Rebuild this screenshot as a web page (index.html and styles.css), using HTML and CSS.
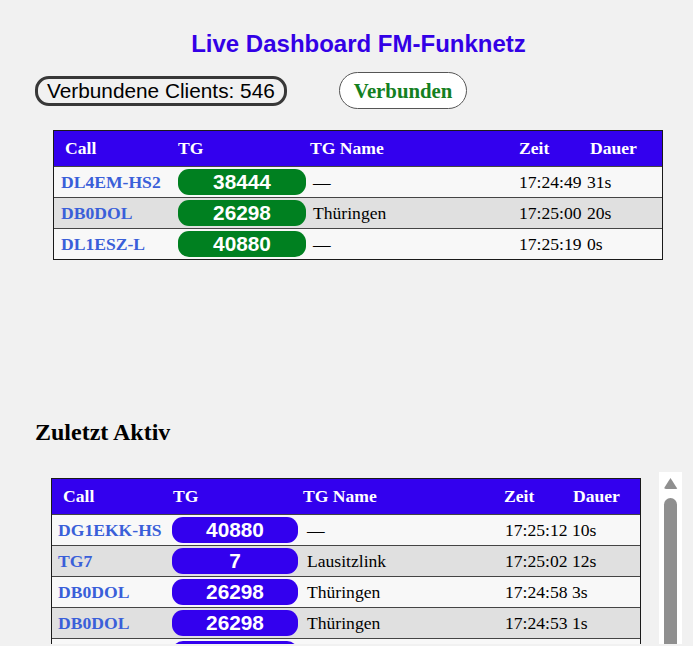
FILE: index.html
```html
<!DOCTYPE html>
<html lang="de">
<head>
<meta charset="utf-8">
<title>Live Dashboard FM-Funknetz</title>
<link rel="stylesheet" href="styles.css">
</head>
<body>
<h1 class="title">Live Dashboard FM-Funknetz</h1>
<div class="status">
  <div class="clients">Verbundene Clients: 546</div>
  <div class="conn">Verbunden</div>
</div>

<section class="live">
  <div class="grid">
    <div class="row head"><div class="cell">Call</div><div class="cell">TG</div><div class="cell">TG Name</div><div class="cell">Zeit</div><div class="cell">Dauer</div></div>
    <div class="row odd"><div class="cell"><a class="call" href="#">DL4EM-HS2</a></div><div class="cell"><span class="pill">38444</span></div><div class="cell">—</div><div class="cell">17:24:49</div><div class="cell">31s</div></div>
    <div class="row even"><div class="cell"><a class="call" href="#">DB0DOL</a></div><div class="cell"><span class="pill">26298</span></div><div class="cell">Thüringen</div><div class="cell">17:25:00</div><div class="cell">20s</div></div>
    <div class="row odd"><div class="cell"><a class="call" href="#">DL1ESZ-L</a></div><div class="cell"><span class="pill">40880</span></div><div class="cell">—</div><div class="cell">17:25:19</div><div class="cell">0s</div></div>
  </div>
</section>

<h2 class="section-title">Zuletzt Aktiv</h2>
<div class="recent-wrap">
  <div class="scroller">
    <div class="grid recent">
      <div class="row head"><div class="cell">Call</div><div class="cell">TG</div><div class="cell">TG Name</div><div class="cell">Zeit</div><div class="cell">Dauer</div></div>
      <div class="row odd"><div class="cell"><a class="call" href="#">DG1EKK-HS</a></div><div class="cell"><span class="pill">40880</span></div><div class="cell">—</div><div class="cell">17:25:12</div><div class="cell">10s</div></div>
      <div class="row even"><div class="cell"><a class="call" href="#">TG7</a></div><div class="cell"><span class="pill">7</span></div><div class="cell">Lausitzlink</div><div class="cell">17:25:02</div><div class="cell">12s</div></div>
      <div class="row odd"><div class="cell"><a class="call" href="#">DB0DOL</a></div><div class="cell"><span class="pill">26298</span></div><div class="cell">Thüringen</div><div class="cell">17:24:58</div><div class="cell">3s</div></div>
      <div class="row even"><div class="cell"><a class="call" href="#">DB0DOL</a></div><div class="cell"><span class="pill">26298</span></div><div class="cell">Thüringen</div><div class="cell">17:24:53</div><div class="cell">1s</div></div>
      <div class="row odd"><div class="cell"><a class="call" href="#">DL4EM-HS2</a></div><div class="cell"><span class="pill">38444</span></div><div class="cell">—</div><div class="cell">17:24:18</div><div class="cell">6s</div></div>
      <div class="row even"><div class="cell"><a class="call" href="#">DL1ESZ-L</a></div><div class="cell"><span class="pill">40880</span></div><div class="cell">—</div><div class="cell">17:23:55</div><div class="cell">4s</div></div>
    </div>
  </div>
  <div class="vscroll" aria-hidden="true"><span class="vscroll-up"></span><span class="vscroll-thumb"></span></div>
</div>
</body>
</html>
```

FILE: styles.css
```css
* { box-sizing: border-box; }

body {
  margin: 0;
  background: #f1f1f1;
  color: #000;
  font-family: "Liberation Serif", "Times New Roman", serif;
}

.title {
  margin: 0;
  padding: 30px 0 0 24px;
  text-align: center;
  font: bold 24px/28px "Liberation Sans", Arial, sans-serif;
  color: #3300e6;
}

.status {
  display: flex;
  align-items: center;
  gap: 52px;
  margin: 14px 0 0 35px;
}

.clients {
  border: 3px solid #383838;
  border-radius: 14px;
  padding: 0 9px;
  font: 20.8px/24px "Liberation Sans", Arial, sans-serif;
}

.conn {
  border: 1px solid #555;
  border-radius: 19px;
  background: #fff;
  padding: 6px 14px;
  font: bold 20.8px/23px "Liberation Serif", "Times New Roman", serif;
  color: #14801f;
}

.live {
  height: 309px;
  padding: 21px 0 0 53px;
}

.grid {
  width: 610px;
  border: 1px solid #1a1a1a;
}

.row {
  display: grid;
  grid-template-columns: 121px 135px 206px 66px 80px;
  height: 31px;
  border-top: 1px solid #444;
  font-size: 17.6px;
}

.row.head {
  height: 35px;
  border-top: none;
  background: #3300ee;
  color: #fff;
  font-weight: bold;
}

.row.odd { background: #f8f8f8; }
.row.even { background: #e0e0e0; }

.cell {
  display: flex;
  align-items: center;
  white-space: nowrap;
}

.call {
  color: #3a5fd9;
  font-weight: bold;
  text-decoration: none;
}

.pill {
  display: block;
  width: 128px;
  height: 26px;
  border-radius: 11px;
  background: #008020;
  color: #fff;
  text-align: center;
  font: bold 20.8px/26px "Liberation Sans", Arial, sans-serif;
}

/* live table paddings */
.row .cell:nth-child(1) { padding-left: 7px; }
.row .cell:nth-child(2) { padding-left: 3px; }
.row .cell:nth-child(3) { padding-left: 3px; }
.row .cell:nth-child(4) { padding-left: 3px; }
.row .cell:nth-child(5) { padding-left: 5px; }
.row.head .cell:nth-child(1) { padding-left: 11px; }
.row.head .cell:nth-child(2) { padding-left: 3px; }
.row.head .cell:nth-child(3) { padding-left: 0; }
.row.head .cell:nth-child(4) { padding-left: 3px; }
.row.head .cell:nth-child(5) { padding-left: 8px; }

.section-title {
  margin: 0 0 0 35px;
  font: bold 24px/28px "Liberation Serif", "Times New Roman", serif;
}

.recent-wrap {
  position: relative;
  margin: 26px 0 0 35px;
  width: 647px;
  height: 172px;
}

.scroller {
  height: 100%;
  overflow-y: auto;
  scrollbar-width: none;
  padding: 6px 23px 0 16px;
}

.vscroll {
  position: absolute;
  top: 0;
  right: 0;
  bottom: 0;
  width: 23px;
  background: #fff;
}

.vscroll-up {
  position: absolute;
  left: 4.5px;
  top: 6px;
  width: 14px;
  height: 11px;
  background: #8f8f8f;
  clip-path: polygon(50% 0, 100% 100%, 0 100%);
  border-radius: 2px;
}

.vscroll-thumb {
  position: absolute;
  left: 5px;
  top: 26px;
  bottom: 0;
  width: 13px;
  background: #8f8f8f;
  border-radius: 7px 7px 0 0;
}

.recent { width: 590px; }
.recent .row { grid-template-columns: 117px 133px 200px 68px 70px; }
.recent .pill { width: 126px; background: #3300ee; }
.recent .row .cell:nth-child(1) { padding-left: 6px; }
.recent .row .cell:nth-child(2) { padding-left: 3px; }
.recent .row .cell:nth-child(3) { padding-left: 5px; }
.recent .row .cell:nth-child(4) { padding-left: 3px; }
.recent .row .cell:nth-child(5) { padding-left: 2px; }
.recent .row.head .cell:nth-child(1) { padding-left: 11px; }
.recent .row.head .cell:nth-child(2) { padding-left: 4px; }
.recent .row.head .cell:nth-child(3) { padding-left: 1px; }
.recent .row.head .cell:nth-child(4) { padding-left: 2px; }
.recent .row.head .cell:nth-child(5) { padding-left: 3px; }
```
